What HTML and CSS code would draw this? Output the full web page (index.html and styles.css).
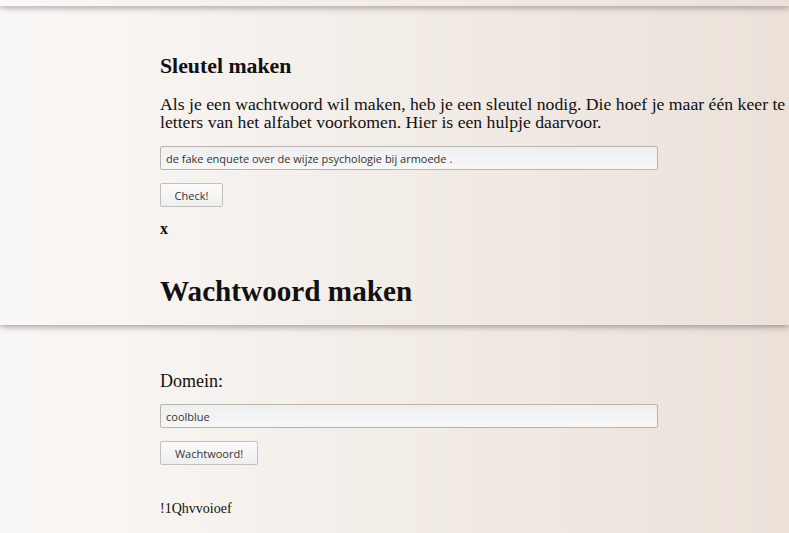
FILE: index.html
```html
<!DOCTYPE html>
<html lang="nl">
<head>
<meta charset="utf-8">
<title>Sleutel maken</title>
<link rel="stylesheet" href="styles.css">
</head>
<body>
<div class="band band-top"></div>
<section class="band band-key">
  <h3 class="title-small">Sleutel maken</h3>
  <p class="intro">Als je een wachtwoord wil maken, heb je een sleutel nodig. Die hoef je maar één keer te maken. Het is een zin waarin alle<br>letters van het alfabet voorkomen. Hier is een hulpje daarvoor.</p>
  <input class="field field-key" type="text" value="de fake enquete over de wijze psychologie bij armoede .">
  <div><button class="btn btn-check" type="button">Check!</button></div>
  <div class="missing">x</div>
  <h1 class="title-big">Wachtwoord maken</h1>
</section>
<section class="band band-pass">
  <div class="label">Domein:</div>
  <input class="field field-domain" type="text" value="coolblue">
  <div><button class="btn btn-pass" type="button">Wachtwoord!</button></div>
  <div class="result">!1Qhvvoioef</div>
</section>
</body>
</html>
```
FILE: styles.css
```css
html, body {
  margin: 0;
  padding: 0;
  height: 100%;
  overflow: hidden;
}
body {
  font-family: "Liberation Serif", serif;
  color: #111;
  background: linear-gradient(to right, #faf8f6, #ebe1d9);
}
.band {
  position: relative;
  background: linear-gradient(to right, #faf8f6, #ebe1d9);
  box-shadow: 0 1px 7px rgba(60, 50, 45, 0.55);
}
.band-top {
  height: 6px;
  z-index: 3;
}
.band-key {
  z-index: 2;
  height: 319px;
  box-sizing: border-box;
  padding: 49px 0 0 160px;
  overflow: hidden;
}
.band-pass {
  z-index: 1;
  height: 208px;
  box-sizing: border-box;
  padding: 47px 0 0 160px;
  box-shadow: none;
}
.title-small {
  margin: 0;
  font-size: 21.8px;
  line-height: 23px;
  font-weight: bold;
}
.intro {
  margin: 17px 0 0;
  width: 1100px;
  font-size: 17.7px;
  line-height: 18px;
}
.field {
  display: block;
  box-sizing: border-box;
  width: 498px;
  height: 24px;
  margin: 15px 0 0;
  padding: 0 5px;
  border: 1px solid #b9b4b0;
  border-radius: 2px;
  background: linear-gradient(to bottom, #efefef, #f7f7f7);
  font-family: "Open Sans", sans-serif;
  font-size: 11px;
  color: #333;
}
.field-domain {
  margin-top: 14px;
}
.btn {
  box-sizing: border-box;
  height: 24px;
  margin: 13px 0 0;
  padding: 0;
  border: 1px solid #c3bfbb;
  border-radius: 2px;
  background: linear-gradient(to bottom, #fbfbfb, #efefef);
  font-family: "Open Sans", sans-serif;
  font-size: 11px;
  color: #333;
}
.btn-check {
  width: 63px;
}
.btn-pass {
  width: 98px;
}
.missing {
  margin-top: 13px;
  font-size: 16px;
  line-height: 18px;
  font-weight: bold;
}
.title-big {
  margin: 36px 0 0;
  font-size: 29.2px;
  line-height: 34px;
  font-weight: bold;
}
.label {
  font-size: 18px;
  line-height: 18px;
}
.result {
  margin-top: 35px;
  font-size: 14px;
  line-height: 17px;
}
```
